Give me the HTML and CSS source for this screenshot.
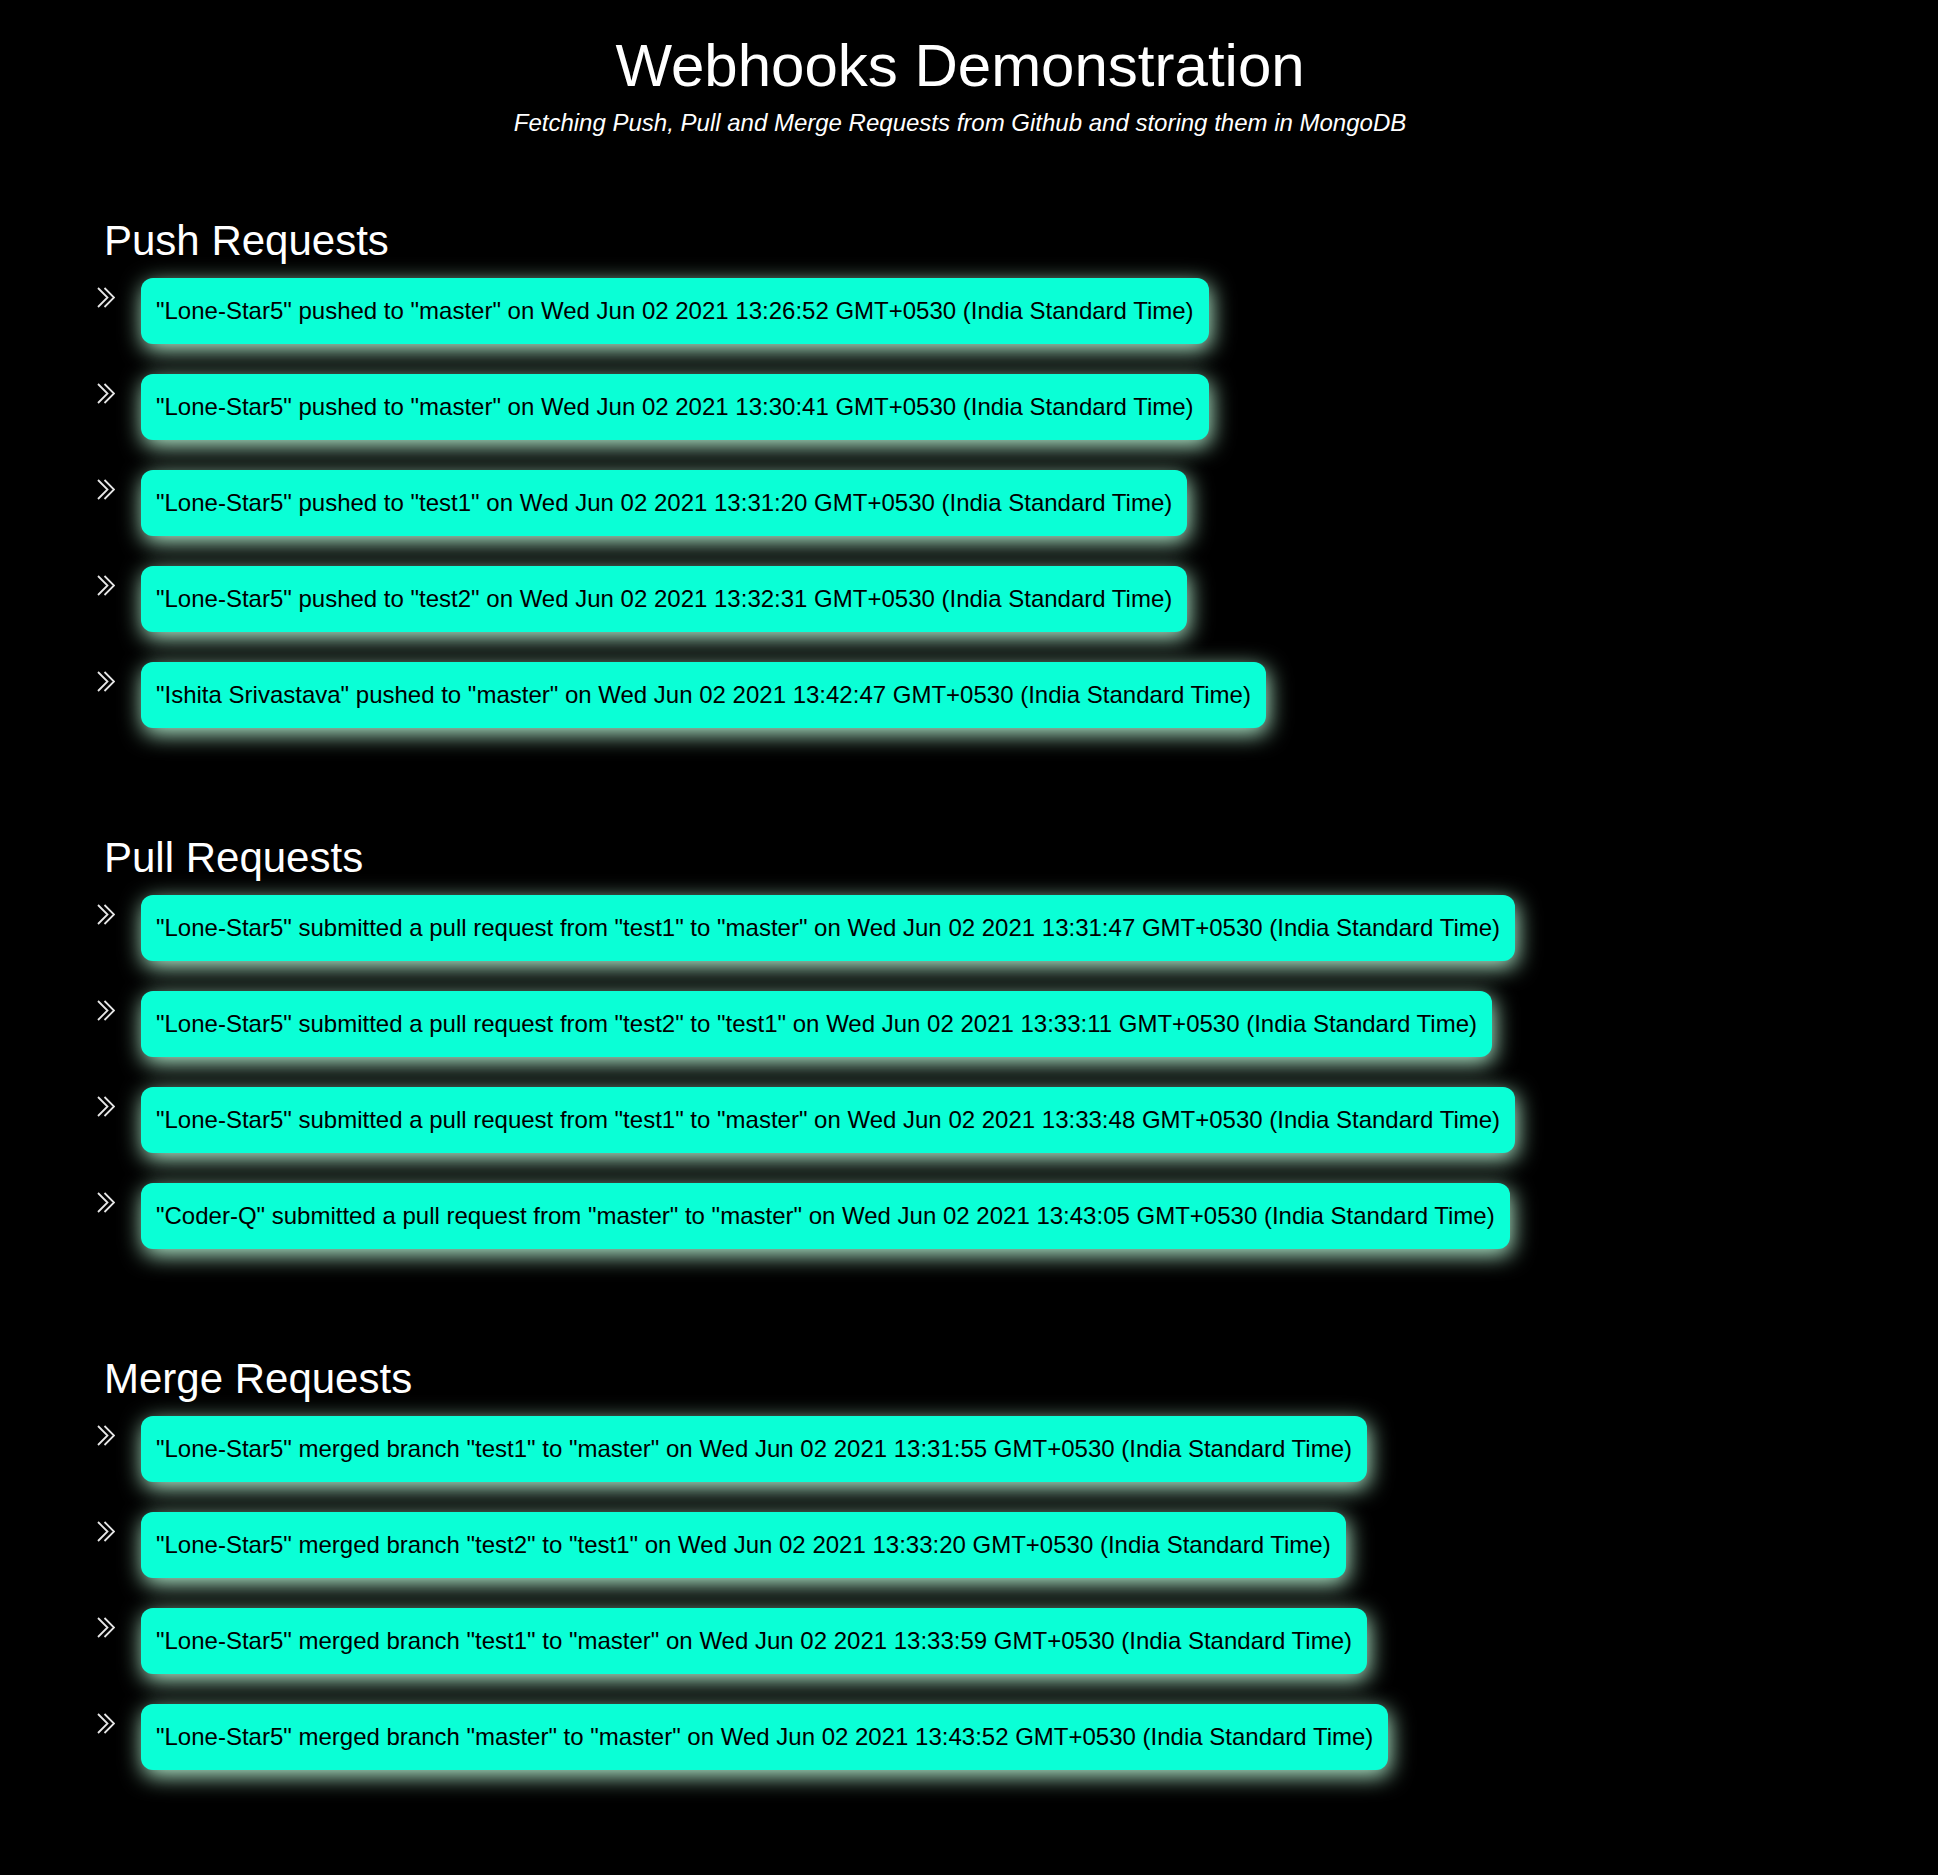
FILE: index.html
```html
<!DOCTYPE html>
<html lang="en">
  <head>
    <meta charset="UTF-8" />
    <meta name="viewport" content="width=device-width, initial-scale=1.0" />
    <title>Webhooks Demonstration</title>
    <link rel="stylesheet" href="styles.css">
  </head>
  <body>
    <div class="page">
      <div class="header">
        <h1>Webhooks Demonstration</h1>
        <p class="tagline">Fetching Push, Pull and Merge Requests from Github and storing them in MongoDB</p>
      </div>

      <div class="sections">
        <!-- Push events -->
        <div class="section">
          <h2>Push Requests</h2>
          <ul id="push" class="events"></ul>
        </div>

        <!-- Pull request events -->
        <div class="section">
          <h2>Pull Requests</h2>
          <ul id="pull" class="events"></ul>
        </div>

        <!-- Merge events -->
        <div class="section">
          <h2>Merge Requests</h2>
          <ul id="merge" class="events"></ul>
        </div>
      </div>
    </div>

    <script>
      const TZ = "GMT+0530 (India Standard Time)";

      const pushes = [
        ["Lone-Star5", "master", "13:26:52"],
        ["Lone-Star5", "master", "13:30:41"],
        ["Lone-Star5", "test1", "13:31:20"],
        ["Lone-Star5", "test2", "13:32:31"],
        ["Ishita Srivastava", "master", "13:42:47"],
      ];

      const pulls = [
        ["Lone-Star5", "test1", "master", "13:31:47"],
        ["Lone-Star5", "test2", "test1", "13:33:11"],
        ["Lone-Star5", "test1", "master", "13:33:48"],
        ["Coder-Q", "master", "master", "13:43:05"],
      ];

      const merges = [
        ["Lone-Star5", "test1", "master", "13:31:55"],
        ["Lone-Star5", "test2", "test1", "13:33:20"],
        ["Lone-Star5", "test1", "master", "13:33:59"],
        ["Lone-Star5", "master", "master", "13:43:52"],
      ];

      function stamp(time) {
        return `Wed Jun 02 2021 ${time} ${TZ}`;
      }

      function render(id, lines) {
        const chevron = `
          <svg class="chevron" width="18" height="21" viewBox="0 0 18 21">
            <path d="M1 1 L10.5 10.5 L1 20" />
            <path d="M7.5 1 L17 10.5 L7.5 20" />
          </svg>`;
        document.getElementById(id).innerHTML = lines
          .map((text) => `<li>${chevron}<span class="event">${text}</span></li>`)
          .join("");
      }

      render(
        "push",
        pushes.map(([who, to, t]) => `"${who}" pushed to "${to}" on ${stamp(t)}`)
      );
      render(
        "pull",
        pulls.map(
          ([who, from, to, t]) =>
            `"${who}" submitted a pull request from "${from}" to "${to}" on ${stamp(t)}`
        )
      );
      render(
        "merge",
        merges.map(
          ([who, from, to, t]) =>
            `"${who}" merged branch "${from}" to "${to}" on ${stamp(t)}`
        )
      );
    </script>
  </body>
</html>
```

FILE: styles.css
```css
body {
  margin: 0;
  background-color: #000;
  color: #fff;
  font-family: "Liberation Sans", Arial, sans-serif;
}

.page {
  width: 1920px;
  padding-top: 31px;
  padding-bottom: 100px;
}

.header {
  text-align: center;
}

.header h1 {
  margin: 0;
  font-size: 60px;
  line-height: 70px;
  font-weight: normal;
}

.tagline {
  margin: 8px 0 0;
  font-size: 24px;
  line-height: 28px;
  font-style: italic;
}

.sections {
  display: flex;
  flex-direction: column;
  gap: 107px;
  margin-top: 81px;
}

.section {
  padding-left: 97px;
}

.section h2 {
  margin: 0 0 15px;
  padding-left: 7px;
  font-size: 42px;
  line-height: 45px;
  font-weight: normal;
}

.events {
  list-style: none;
  margin: 0;
  padding: 0;
  display: flex;
  flex-direction: column;
  gap: 30px;
}

.events li {
  display: flex;
  align-items: flex-start;
  gap: 26px;
}

.chevron {
  flex: none;
  margin-top: 9px;
  fill: none;
  stroke: #e6e6e6;
  stroke-width: 1.8;
}

.event {
  padding: 19px 15px;
  border-radius: 12px;
  background-color: #0affd6;
  color: #000;
  font-size: 24px;
  line-height: 28px;
  box-shadow: 2px 6px 22px #b4f0d0;
  white-space: nowrap;
}
```
